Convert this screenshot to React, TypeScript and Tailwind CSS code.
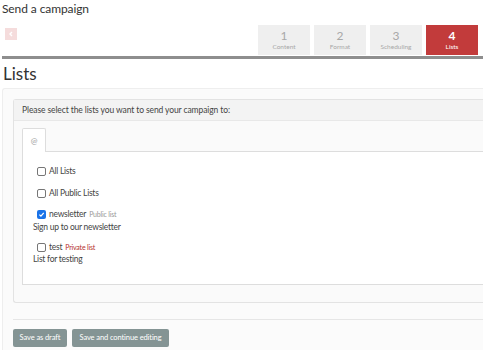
import React from "react";

function Box({ checked }: { checked?: boolean }) {
  return checked ? (
    <span className="inline-flex h-[9px] w-[9px] shrink-0 items-center justify-center rounded-[2px] bg-[#1a73e8]">
      <svg width="7" height="7" viewBox="0 0 10 10">
        <path d="M2 5.2 L4.2 7.4 L8.2 2.8" fill="none" stroke="white" strokeWidth="1.8" />
      </svg>
    </span>
  ) : (
    <span className="inline-block h-[9px] w-[9px] shrink-0 rounded-[2px] border border-[#767676] bg-white" />
  );
}

function Step({ n, label, active }: { n: string; label: string; active?: boolean }) {
  return (
    <div
      className={
        active
          ? "flex h-[30px] w-[52px] flex-col items-center justify-center bg-[#c23b3b] text-white"
          : "flex h-[30px] w-[52px] flex-col items-center justify-center bg-[#efefef] text-[#a8a8a8]"
      }
    >
      <div className={active ? "text-[12px] font-bold leading-[13px]" : "text-[12px] leading-[13px]"}>{n}</div>
      <div className="text-[6.5px] leading-[9px]">{label}</div>
    </div>
  );
}

export default function App() {
  return (
    <div
      className="h-[350px] w-[483px] overflow-hidden bg-white text-[#444]"
      style={{ fontFamily: "Lato, 'Open Sans', sans-serif" }}
    >
      <div className="pl-[2px] pt-[1px] text-[12px] leading-[16px] tracking-[-0.1px] text-[#333]">Send a campaign</div>
      <div className="mt-[8px] flex items-start justify-between pr-[5px]">
        <div className="ml-[5px] mt-[3px] flex h-[12px] w-[12px] items-center justify-center bg-[#f5dcdc]">
          <svg width="6" height="6" viewBox="0 0 6 6">
            <path d="M4 1 L2 3 L4 5" fill="none" stroke="white" strokeWidth="1.4" />
          </svg>
        </div>
        <div className="flex gap-[4px]">
          <Step n="1" label="Content" />
          <Step n="2" label="Format" />
          <Step n="3" label="Scheduling" />
          <Step n="4" label="Lists" active />
        </div>
      </div>
      <div className="ml-[2px] mt-[1px] h-[3px] bg-[#8e8e8e]" />
      <div className="pl-[3px] pt-[5px] text-[17px] leading-[20px] text-[#333]">Lists</div>
      <div className="ml-[2px] mt-[4px] rounded-l-[3px] border border-r-0 border-[#eeeeee] bg-[#fbfbfb] pl-[10px] pt-[10px]">
        <div className="rounded-l-[3px] border border-r-0 border-[#e3e3e3] bg-[#fafafa]">
          <div className="flex h-[21px] items-center border-b border-[#e8e8e8] bg-[#f3f3f3] pl-[8px] text-[8.5px] tracking-[-0.1px]">
            Please select the lists you want to send your campaign to:
          </div>
          <div className="pl-[8px] pt-[7px] pb-[17px]">
            <div className="relative z-10 -mb-px flex h-[24px] w-[24px] items-center justify-center rounded-t-[2px] border border-b-0 border-[#dddddd] bg-white text-[8px] text-[#999]">
              @
            </div>
            <div className="h-[134px] border border-r-0 border-[#dddddd] bg-white pl-[10px] pt-[13px] text-[8.5px] leading-[12px] tracking-[-0.25px]">
              <div className="flex h-[12px] items-center gap-[3px] pl-[4px]">
                <Box />
                <span>All Lists</span>
              </div>
              <div className="mt-[10px] flex h-[12px] items-center gap-[3px] pl-[4px]">
                <Box />
                <span>All Public Lists</span>
              </div>
              <div className="mt-[9px] flex h-[12px] items-center gap-[3px] pl-[4px]">
                <Box checked />
                <span>newsletter</span>
                <span className="text-[7px] tracking-[-0.2px] text-[#999]">Public list</span>
              </div>
              <div className="mt-[1px]">Sign up to our newsletter</div>
              <div className="mt-[8px] flex h-[12px] items-center gap-[3px] pl-[4px]">
                <Box />
                <span>test</span>
                <span className="text-[7px] tracking-[-0.2px] text-[#b5312f]">Private list</span>
              </div>
              <div>List for testing</div>
            </div>
          </div>
        </div>
        <div className="mt-[16px] border-t border-[#e6e6e6] pt-[9px] pb-[10px]">
          <div className="flex gap-[5px]">
            <div className="flex h-[18px] w-[54px] items-center justify-center rounded-[2px] bg-[#849494] text-[7.5px] tracking-[-0.1px] text-white">
              Save as draft
            </div>
            <div className="flex h-[18px] w-[97px] items-center justify-center rounded-[2px] bg-[#849494] text-[7.5px] tracking-[-0.1px] text-white">
              Save and continue editing
            </div>
          </div>
        </div>
      </div>
    </div>
  );
}
